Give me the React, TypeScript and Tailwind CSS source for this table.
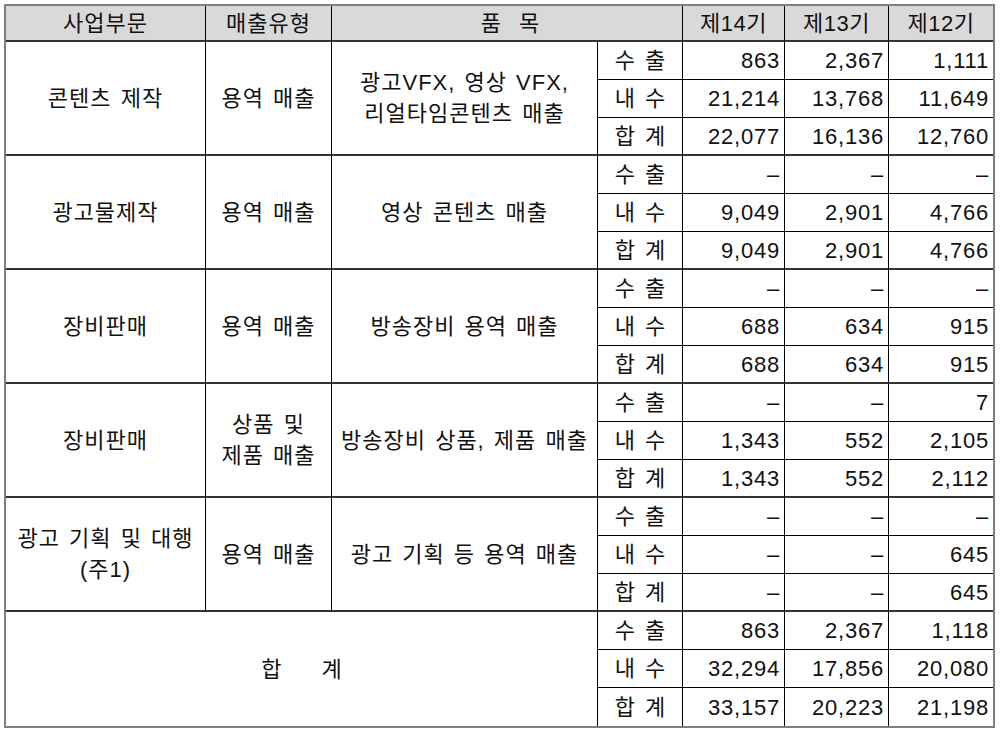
import React from "react"

type Group = {
  segment: string[]
  type: string[]
  item: string[]
  rows: [string, string, string][]
}

const groups: Group[] = [
  {
    segment: ["콘텐츠 제작"],
    type: ["용역 매출"],
    item: ["광고VFX, 영상 VFX,", "리얼타임콘텐츠 매출"],
    rows: [
      ["863", "2,367", "1,111"],
      ["21,214", "13,768", "11,649"],
      ["22,077", "16,136", "12,760"],
    ],
  },
  {
    segment: ["광고물제작"],
    type: ["용역 매출"],
    item: ["영상 콘텐츠 매출"],
    rows: [
      ["–", "–", "–"],
      ["9,049", "2,901", "4,766"],
      ["9,049", "2,901", "4,766"],
    ],
  },
  {
    segment: ["장비판매"],
    type: ["용역 매출"],
    item: ["방송장비 용역 매출"],
    rows: [
      ["–", "–", "–"],
      ["688", "634", "915"],
      ["688", "634", "915"],
    ],
  },
  {
    segment: ["장비판매"],
    type: ["상품 및", "제품 매출"],
    item: ["방송장비 상품, 제품 매출"],
    rows: [
      ["–", "–", "7"],
      ["1,343", "552", "2,105"],
      ["1,343", "552", "2,112"],
    ],
  },
  {
    segment: ["광고 기획 및 대행", "(주1)"],
    type: ["용역 매출"],
    item: ["광고 기획 등 용역 매출"],
    rows: [
      ["–", "–", "–"],
      ["–", "–", "645"],
      ["–", "–", "645"],
    ],
  },
]

const total: [string, string, string][] = [
  ["863", "2,367", "1,118"],
  ["32,294", "17,856", "20,080"],
  ["33,157", "20,223", "21,198"],
]

const subLabels = ["수 출", "내 수", "합 계"]

function Lines({ lines }: { lines: string[] }) {
  return (
    <div className="flex flex-col items-center leading-[31px] tracking-[1px] [word-spacing:2px]">
      {lines.map((l, i) => (
        <span key={i}>{l}</span>
      ))}
    </div>
  )
}

export default function App() {
  return (
    <div className="w-[1000px] h-[732px] bg-white pt-[4px] pl-[4px] font-['Liberation_Sans','Noto_Sans_CJK_KR',sans-serif] text-[22px] text-[#111]">
      <div className="w-[991px] border-2 border-[#7f7f7f] grid grid-cols-[200px_126px_266px_85px_102px_104px_104px] grid-rows-[36px] auto-rows-[38px]">
        {/* header */}
        <div className="bg-[#d9d9d9] border-r border-black border-b-2 border-b-[#333] flex items-center justify-center tracking-[1px]">사업부문</div>
        <div className="bg-[#d9d9d9] border-r border-black border-b-2 border-b-[#333] flex items-center justify-center tracking-[1px]">매출유형</div>
        <div className="col-span-2 bg-[#d9d9d9] border-r border-black border-b-2 border-b-[#333] flex items-center justify-center pl-[6px] [word-spacing:12px]">품 목</div>
        <div className="bg-[#d9d9d9] border-r border-black border-b-2 border-b-[#333] flex items-center justify-center tracking-[0.5px]">제14기</div>
        <div className="bg-[#d9d9d9] border-r border-black border-b-2 border-b-[#333] flex items-center justify-center tracking-[0.5px]">제13기</div>
        <div className="bg-[#d9d9d9] border-b-2 border-b-[#333] flex items-center justify-center tracking-[0.5px]">제12기</div>

        {groups.map((g, gi) => (
          <React.Fragment key={gi}>
            <div className="row-span-3 border-r border-black border-b-2 border-b-[#333] flex items-center justify-center">
              <Lines lines={g.segment} />
            </div>
            <div className="row-span-3 border-r border-black border-b-2 border-b-[#333] flex items-center justify-center">
              <Lines lines={g.type} />
            </div>
            <div className="row-span-3 border-r border-black border-b-2 border-b-[#333] flex items-center justify-center">
              <Lines lines={g.item} />
            </div>
            {g.rows.map((r, ri) => (
              <React.Fragment key={ri}>
                <div
                  className={`border-r border-black flex items-center justify-center [word-spacing:4px] ${
                    ri === 2 ? "border-b-2 border-b-[#333]" : "border-b"
                  }`}
                >
                  {subLabels[ri]}
                </div>
                {r.map((v, vi) => (
                  <div
                    key={vi}
                    className={`flex items-center justify-end pr-[4px] text-[22px] tabular-nums tracking-[0.8px] ${
                      vi < 2 ? "border-r border-black" : ""
                    } ${ri === 2 ? "border-b-2 border-b-[#333]" : "border-b border-b-black"}`}
                  >
                    {v}
                  </div>
                ))}
              </React.Fragment>
            ))}
          </React.Fragment>
        ))}

        {/* total */}
        <div className="col-span-3 row-span-3 border-r border-black flex items-center justify-center [word-spacing:34px]">
          합 계
        </div>
        {total.map((r, ri) => (
          <React.Fragment key={ri}>
            <div className={`border-r border-black flex items-center justify-center [word-spacing:4px] ${ri < 2 ? "border-b" : ""}`}>
              {subLabels[ri]}
            </div>
            {r.map((v, vi) => (
              <div
                key={vi}
                className={`flex items-center justify-end pr-[4px] text-[22px] tabular-nums tracking-[0.8px] border-black ${
                  vi < 2 ? "border-r" : ""
                } ${ri < 2 ? "border-b" : ""}`}
              >
                {v}
              </div>
            ))}
          </React.Fragment>
        ))}
      </div>
    </div>
  )
}
